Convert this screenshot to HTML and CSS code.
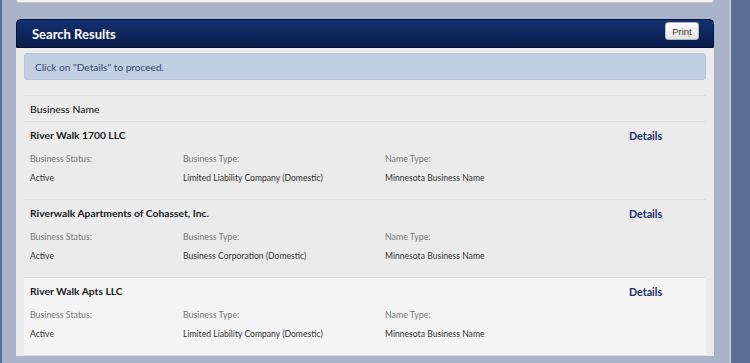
FILE: index.html
```html
<!DOCTYPE html>
<html lang="en">
<head>
  <meta charset="UTF-8">
  <title>Search Results</title>
  <link rel="stylesheet" href="styles.css">
</head>
<body>
  <div class="page">
    <div class="prev-panel"></div>
    <div class="panel">
      <div class="panel-heading">
        <h3>Search Results</h3>
        <button type="button" class="print">Print</button>
      </div>
      <div class="panel-body">
        <div class="alert">Click on "Details" to proceed.</div>
        <div class="list-head">Business Name</div>

        <div class="result">
          <div class="name">River Walk 1700 LLC</div>
          <a class="details" href="#">Details</a>
          <div class="label">Business Status:</div>
          <div class="label">Business Type:</div>
          <div class="label">Name Type:</div>
          <div></div>
          <div class="value">Active</div>
          <div class="value">Limited Liability Company (Domestic)</div>
          <div class="value">Minnesota Business Name</div>
          <div></div>
        </div>

        <div class="result">
          <div class="name">Riverwalk Apartments of Cohasset, Inc.</div>
          <a class="details" href="#">Details</a>
          <div class="label">Business Status:</div>
          <div class="label">Business Type:</div>
          <div class="label">Name Type:</div>
          <div></div>
          <div class="value">Active</div>
          <div class="value">Business Corporation (Domestic)</div>
          <div class="value">Minnesota Business Name</div>
          <div></div>
        </div>

        <div class="result hover">
          <div class="name">River Walk Apts LLC</div>
          <a class="details" href="#">Details</a>
          <div class="label">Business Status:</div>
          <div class="label">Business Type:</div>
          <div class="label">Name Type:</div>
          <div></div>
          <div class="value">Active</div>
          <div class="value">Limited Liability Company (Domestic)</div>
          <div class="value">Minnesota Business Name</div>
          <div></div>
        </div>
      </div>
    </div>
  </div>
</body>
</html>
```

FILE: styles.css
```css
body {
  margin: 0;
  background: #5c6d96;
  font-family: Lato, "Open Sans", sans-serif;
  color: #222;
}
.page {
  margin-left: 2px;
  width: 698px;
  min-height: 363px;
  padding: 0 16px 0 14px;
  background: #a9b4cb;
  border-right: 1px solid #d3d9e6;
}
.prev-panel {
  height: 2px;
  background: #f2f2f2;
  border: 1px solid #c3c8d2;
  border-top: none;
  border-radius: 0 0 3px 3px;
}
.panel {
  margin-top: 16px;
  background: #ebebeb;
  border-radius: 4px 4px 0 0;
}
.panel-heading {
  height: 29px;
  display: flex;
  align-items: center;
  justify-content: space-between;
  padding: 0 14px 0 15px;
  background: linear-gradient(#123171, #0a1c49);
  border: 1px solid #06143a;
  border-radius: 4px 4px 0 0;
  box-sizing: border-box;
}
.panel-heading h3 {
  margin: 0;
  color: #fff;
  font-size: 13px;
  font-weight: 700;
}
.print {
  height: 18px;
  width: 34px;
  padding: 0;
  margin-bottom: 5px;
  font-family: "Liberation Sans", Arial, sans-serif;
  font-size: 9.5px;
  color: #333;
  background: linear-gradient(#ffffff, #e4e4e4);
  border: 1px solid #b5b5b5;
  border-radius: 3px;
}
.panel-body {
  padding: 5px 8px 0 8px;
}
.alert {
  height: 27px;
  box-sizing: border-box;
  padding: 0 10px;
  display: flex;
  align-items: center;
  font-size: 10.1px;
  color: #34456a;
  background: #c2cfe2;
  border: 1px solid #b7c6dc;
  border-radius: 3px;
}
.list-head {
  margin-top: 15px;
  height: 27px;
  padding-left: 6px;
  display: flex;
  align-items: center;
  font-size: 10.4px;
  font-weight: 500;
  border-top: 1px solid #dcdcdc;
  border-bottom: 1px solid #dcdcdc;
  box-sizing: border-box;
}
.result {
  display: grid;
  grid-template-columns: 153px 202px 244px 1fr;
  grid-template-rows: 26px 20px 20px;
  align-items: center;
  height: 78px;
  padding: 0 6px;
  border-bottom: 1px solid #dcdcdc;
  box-sizing: border-box;
}
.result.hover {
  background: #f4f4f4;
}
.name {
  grid-column: 1 / 4;
  font-size: 10.3px;
  font-weight: 700;
  color: #1a1a1a;
}
.details {
  font-size: 10.7px;
  font-weight: 700;
  color: #1b2b6b;
  text-decoration: none;
}
.label {
  font-size: 8.8px;
  color: #777;
}
.value {
  font-size: 8.6px;
  color: #333;
}
```
